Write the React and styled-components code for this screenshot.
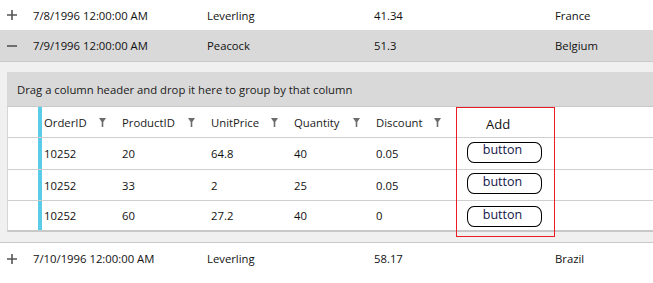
import React from "react";
import styled, { createGlobalStyle } from "styled-components";

const Global = createGlobalStyle`
  html, body { margin: 0; padding: 0; background: #ffffff; }
  body { font-family: "Open Sans", "Noto Sans", sans-serif; font-size: 11.3px; color: #111; overflow: hidden; }
`;

const Page = styled.div`
  width: 653px;
  height: 283px;
  overflow: hidden;
  background: #fff;
`;

const MainRow = styled.div`
  display: grid;
  grid-template-columns: 33px 174px 167px 181px 1fr;
  align-items: center;
  height: ${(p) => p.$h}px;
  background: ${(p) => (p.$selected ? "#d9d9d9" : "#fff")};
  border-bottom: ${(p) => (p.$border ? "1px solid #c9c9c9" : "none")};
  box-sizing: border-box;
  white-space: nowrap;
`;

const Expander = styled.div`
  display: flex;
  align-items: center;
  padding-left: 7px;
`;

const Cell = styled.div`
  overflow: hidden;
`;

const Detail = styled.div`
  background: #f0f0f0;
  padding: 10px 0 10px 7px;
  border-bottom: 1px solid #c9c9c9;
  height: 181px;
  box-sizing: border-box;
`;

const GridArea = styled.div`
  position: relative;
  background: #fff;
  border-left: 1px solid #d6d6d6;
  border-bottom: 2px solid #c8c8c8;
`;

const GroupPanel = styled.div`
  height: 35px;
  background: #d9d9d9;
  display: flex;
  align-items: center;
  padding-left: 10px;
  color: #1a1a1a;
  border-bottom: 1px solid #c9c9c9;
  box-sizing: border-box;
  margin-left: -1px;
`;

const GridRow = styled.div`
  display: grid;
  grid-template-columns: 30px 4px 76px 89px 83px 82px 81px 101px 1fr;
  height: ${(p) => p.$h}px;
  border-bottom: ${(p) => (p.$last ? "none" : "1px solid #cfcfcf")};
  box-sizing: border-box;
  white-space: nowrap;
`;

const Indent = styled.div``;

const Bar = styled.div`
  background: #5bcce7;
`;

const DataCell = styled.div`
  display: flex;
  align-items: center;
  padding-left: ${(p) => (p.$first ? 2 : 4)}px;
  color: #111;
`;

const HeaderCell = styled(DataCell)`
  justify-content: space-between;
  padding-right: 12px;
  color: #1a1a1a;
`;

const AddHeader = styled.div`
  display: flex;
  align-items: center;
  padding-left: 33px;
  padding-top: 3px;
  font-size: 13px;
  color: #111;
`;

const ButtonCell = styled.div`
  display: flex;
  align-items: center;
  padding-left: 14px;
`;

const RowButton = styled.button`
  width: 75px;
  height: 21px;
  border: 1px solid #000;
  border-radius: 7px / 8px;
  background: #fff;
  font-family: "Open Sans", "Noto Sans", sans-serif;
  font-size: 12.5px;
  color: #15154a;
  padding: 0 4px 4px 0;
  line-height: 14px;
  margin-top: ${(p) => p.$dy}px;
`;

const RedFrame = styled.div`
  position: absolute;
  left: 448px;
  top: 35px;
  width: 97px;
  height: 128px;
  border: 1px solid #ec1c24;
  pointer-events: none;
`;

const Filter = () => (
  <svg width="7" height="9" viewBox="0 0 7 9">
    <path d="M0 0 H7 L4.3 4 V9 H2.7 V4 Z" fill="#6b6b6b" />
  </svg>
);

const Plus = () => (
  <svg width="10" height="10" viewBox="0 0 10 10">
    <path d="M0 5 H10 M5 0 V10" stroke="#555" strokeWidth="1.6" />
  </svg>
);

const Minus = () => (
  <svg width="10" height="10" viewBox="0 0 10 10">
    <path d="M0 5 H10" stroke="#555" strokeWidth="1.6" />
  </svg>
);

const columns = ["OrderID", "ProductID", "UnitPrice", "Quantity", "Discount"];
const rows = [
  { cells: ["10252", "20", "64.8", "40", "0.05"], h: 32, dy: -3 },
  { cells: ["10252", "33", "2", "25", "0.05"], h: 31, dy: -3 },
  { cells: ["10252", "60", "27.2", "40", "0"], h: 29, dy: 2 },
];

export default function App() {
  return (
    <Page>
      <Global />
      <MainRow $h={30}>
        <Expander><Plus /></Expander>
        <Cell>7/8/1996 12:00:00 AM</Cell>
        <Cell>Leverling</Cell>
        <Cell>41.34</Cell>
        <Cell>France</Cell>
      </MainRow>
      <MainRow $h={32} $selected $border>
        <Expander><Minus /></Expander>
        <Cell>7/9/1996 12:00:00 AM</Cell>
        <Cell>Peacock</Cell>
        <Cell>51.3</Cell>
        <Cell>Belgium</Cell>
      </MainRow>
      <Detail>
        <GridArea>
          <GroupPanel>Drag a column header and drop it here to group by that column</GroupPanel>
          <GridRow $h={31}>
            <Indent />
            <Bar />
            {columns.map((c, i) => (
              <HeaderCell key={c} $first={i === 0}>
                <span>{c}</span>
                <Filter />
              </HeaderCell>
            ))}
            <AddHeader>Add</AddHeader>
            <div />
          </GridRow>
          {rows.map((r, ri) => (
            <GridRow key={ri} $h={r.h} $last={ri === rows.length - 1}>
              <Indent />
              <Bar />
              {r.cells.map((v, i) => (
                <DataCell key={i} $first={i === 0}>{v}</DataCell>
              ))}
              <ButtonCell>
                <RowButton $dy={r.dy}>button</RowButton>
              </ButtonCell>
              <div />
            </GridRow>
          ))}
          <RedFrame />
        </GridArea>
      </Detail>
      <MainRow $h={31}>
        <Expander><Plus /></Expander>
        <Cell>7/10/1996 12:00:00 AM</Cell>
        <Cell>Leverling</Cell>
        <Cell>58.17</Cell>
        <Cell>Brazil</Cell>
      </MainRow>
    </Page>
  );
}
